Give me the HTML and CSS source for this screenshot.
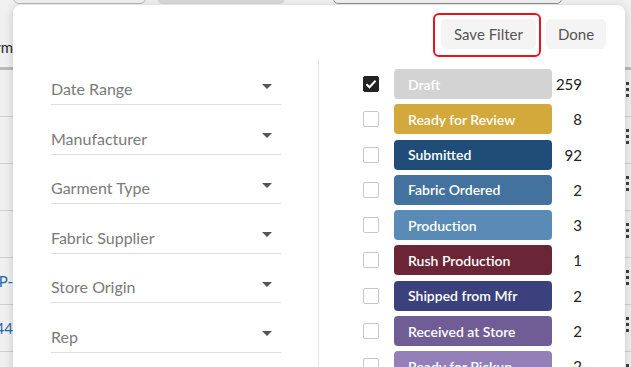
FILE: index.html
```html
<!DOCTYPE html>
<html lang="en">
<head>
    <meta charset="UTF-8">
    <meta name="viewport" content="width=device-width, initial-scale=1.0">
    <title>Order Filters</title>
    <link rel="stylesheet" href="styles.css">
</head>
<body>

<div class="page">
    <div class="toolbar">
        <div class="tool tool-outline"></div>
        <div class="tool tool-filled"></div>
        <div class="tool tool-search"></div>
    </div>
    <div class="table">
        <div class="table-head">
            <span class="cell-left"><span>Form</span></span>
        </div>
        <div class="table-row"><span class="cell-left"></span><span class="kebab"><i></i><i></i><i></i></span></div>
        <div class="table-row"><span class="cell-left"></span><span class="kebab"><i></i><i></i><i></i></span></div>
        <div class="table-row"><span class="cell-left"></span><span class="kebab"><i></i><i></i><i></i></span></div>
        <div class="table-row"><span class="cell-left"></span><span class="kebab"><i></i><i></i><i></i></span></div>
        <div class="table-row"><span class="cell-left link"><span>SP-</span></span><span class="kebab"><i></i><i></i><i></i></span></div>
        <div class="table-row"><span class="cell-left link"><span>1044</span></span><span class="kebab"><i></i><i></i><i></i></span></div>
        <div class="table-row"><span class="cell-left"></span><span class="kebab"><i></i><i></i><i></i></span></div>
    </div>
</div>

<div class="overlay"></div>

<div class="dialog">
    <div class="dialog-actions">
        <span class="highlight">
            <button type="button" class="btn">Save Filter</button>
        </span>
        <button type="button" class="btn">Done</button>
    </div>

    <div class="dialog-body">
        <div class="fields">
            <div class="field"><span>Date Range</span><span class="caret"></span></div>
            <div class="field"><span>Manufacturer</span><span class="caret"></span></div>
            <div class="field"><span>Garment Type</span><span class="caret"></span></div>
            <div class="field"><span>Fabric Supplier</span><span class="caret"></span></div>
            <div class="field"><span>Store Origin</span><span class="caret"></span></div>
            <div class="field"><span>Rep</span><span class="caret"></span></div>
        </div>

        <div class="statuses">
            <div class="status-row">
                <span class="check checked">
                    <svg viewBox="0 0 16 16" width="16" height="16"><path d="M3.5 8.2l3 3 6-6.4" fill="none" stroke="#fff" stroke-width="2"/></svg>
                </span>
                <span class="pill pill-draft">Draft</span>
                <span class="count">259</span>
            </div>
            <div class="status-row">
                <span class="check"></span>
                <span class="pill pill-review">Ready for Review</span>
                <span class="count">8</span>
            </div>
            <div class="status-row">
                <span class="check"></span>
                <span class="pill pill-submitted">Submitted</span>
                <span class="count">92</span>
            </div>
            <div class="status-row">
                <span class="check"></span>
                <span class="pill pill-fabric">Fabric Ordered</span>
                <span class="count">2</span>
            </div>
            <div class="status-row">
                <span class="check"></span>
                <span class="pill pill-production">Production</span>
                <span class="count">3</span>
            </div>
            <div class="status-row">
                <span class="check"></span>
                <span class="pill pill-rush">Rush Production</span>
                <span class="count">1</span>
            </div>
            <div class="status-row">
                <span class="check"></span>
                <span class="pill pill-shipped">Shipped from Mfr</span>
                <span class="count">2</span>
            </div>
            <div class="status-row">
                <span class="check"></span>
                <span class="pill pill-received">Received at Store</span>
                <span class="count">2</span>
            </div>
            <div class="status-row">
                <span class="check"></span>
                <span class="pill pill-pickup">Ready for Pickup</span>
                <span class="count">2</span>
            </div>
        </div>
    </div>
</div>

</body>
</html>
```

FILE: styles.css
```css
body {
    margin: 0;
    padding: 0;
    font-family: Lato, "Open Sans", sans-serif;
    background-color: #ffffff;
    color: #333333;
    overflow: hidden;
}

/* Page behind the dialog */
.page {
    width: 631px;
    height: 367px;
}
.toolbar {
    display: flex;
    height: 4px;
    overflow: hidden;
    align-items: flex-end;
}
.tool {
    height: 30px;
    flex-shrink: 0;
    border-radius: 6px;
    box-sizing: border-box;
}
.tool-outline {
    width: 133px;
    margin-left: 13px;
    border: 1px solid #c4c4c4;
}
.tool-filled {
    width: 128px;
    margin-left: 11px;
    background-color: #e6e6e6;
}
.tool-search {
    width: 229px;
    margin-left: 48px;
    border: 1px solid #9a9a9a;
    border-radius: 5px;
}
.table-head {
    height: 63px;
    display: flex;
    align-items: center;
    border-bottom: 3px solid #c6c6c6;
    font-size: 15px;
    color: #2b2b2b;
}
.table-head .cell-left {
    margin-top: 22px;
}
.table-row {
    height: 46px;
    border-bottom: 1px solid #dcdcdc;
    display: flex;
    align-items: center;
    justify-content: space-between;
    font-size: 15px;
}
.cell-left {
    width: 13px;
    overflow: hidden;
    white-space: nowrap;
    display: flex;
    justify-content: flex-end;
}
.cell-left span {
    flex-shrink: 0;
}
.link {
    color: #1d6fb8;
}
.kebab {
    display: flex;
    flex-direction: column;
    gap: 3px;
    width: 5px;
    margin-top: -8px;
}
.kebab i {
    display: block;
    width: 3px;
    height: 3px;
    background-color: #444444;
}

.overlay {
    position: absolute;
    inset: 0;
    background-color: rgba(0, 0, 0, 0.06);
}

/* Filter dialog */
.dialog {
    position: absolute;
    left: 13px;
    top: 5px;
    width: 612px;
    height: 400px;
    background-color: #ffffff;
    border-radius: 8px;
    box-shadow: 0 2px 10px rgba(0, 0, 0, 0.18);
}
.dialog-actions {
    display: flex;
    justify-content: flex-end;
    align-items: flex-start;
    gap: 5px;
    padding: 8px 19px 0 0;
    height: 46px;
}
.highlight {
    display: flex;
    padding: 4px 3px 6px 6px;
    border: 2px solid #e8141b;
    border-radius: 6px;
}
.btn {
    font-family: Lato, "Open Sans", sans-serif;
    font-size: 15px;
    color: #555555;
    background-color: #f4f4f4;
    border: none;
    border-radius: 5px;
    height: 30px;
    padding: 0 12px;
    cursor: pointer;
}
.highlight .btn {
    width: 95px;
}
.dialog-actions > .btn {
    width: 60px;
    margin-top: 6px;
}

.dialog-body {
    display: flex;
}
.fields {
    width: 230px;
    padding: 10px 37px 0 38px;
    border-right: 1px solid #e2e2e2;
    height: 320px;
}
.field {
    height: 36px;
    margin-bottom: 13.6px;
    border-bottom: 1px solid #e0e0e0;
    display: flex;
    align-items: center;
    justify-content: space-between;
    padding-top: 4px;
    box-sizing: border-box;
    font-size: 16px;
    color: #7a7a7a;
}
.field .caret {
    width: 0;
    height: 0;
    margin: 0 9px 5px 0;
    border-left: 5px solid transparent;
    border-right: 5px solid transparent;
    border-top: 5px solid #555555;
}

.statuses {
    padding: 10px 0 0 44px;
}
.status-row {
    display: flex;
    align-items: center;
    height: 30px;
    margin-bottom: 5.3px;
}
.check {
    width: 16px;
    height: 16px;
    box-sizing: border-box;
    border: 1.5px solid #c9c9c9;
    border-radius: 2px;
    margin-right: 15px;
    display: flex;
}
.check.checked {
    background-color: #222222;
    border-color: #222222;
}
.check svg {
    margin: -1.5px;
}
.pill {
    width: 158px;
    height: 30px;
    box-sizing: border-box;
    padding: 0 14px;
    border-radius: 4px;
    display: flex;
    align-items: center;
    color: #ffffff;
    font-size: 14px;
    font-weight: 600;
    white-space: nowrap;
}
.count {
    width: 30px;
    text-align: right;
    font-size: 15px;
    color: #222222;
}

.pill-draft { background-color: #d3d3d3; }
.pill-review { background-color: #d4a93c; }
.pill-submitted { background-color: #1f4d78; }
.pill-fabric { background-color: #42729d; }
.pill-production { background-color: #5a8ab6; }
.pill-rush { background-color: #6a2636; }
.pill-shipped { background-color: #3a417d; }
.pill-received { background-color: #705d95; }
.pill-pickup { background-color: #957fb9; }
```
